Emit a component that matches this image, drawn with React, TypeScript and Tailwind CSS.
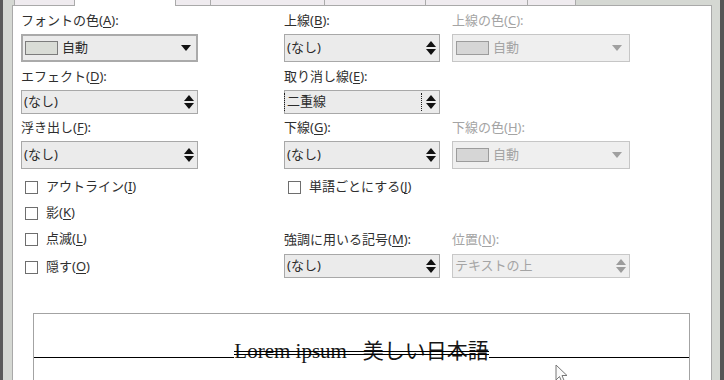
import React from "react"

const tabs = [
  { w: "w-[61px]", active: false },
  { w: "w-[101px]", active: true },
  { w: "w-[35px]", active: false },
  { w: "w-[114px]", active: false },
  { w: "w-[101px]", active: false },
  { w: "w-[102px]", active: false },
  { w: "w-[48px]", active: false },
]

function Label({ text, m, disabled }: { text: string; m: string; disabled?: boolean }) {
  return (
    <div
      className={`h-[17px] leading-[17px] text-[13px] whitespace-nowrap ${disabled ? "text-[#a4a4a4]" : "text-[#2f2f2f]"}`}
    >
      {text}(<u className="underline-offset-2">{m}</u>):
    </div>
  )
}

function Tri({ up, color }: { up?: boolean; color: string }) {
  return (
    <svg width="10" height="6" viewBox="0 0 10 6">
      <path d={up ? "M5 0 L10 6 L0 6 Z" : "M0 0 L10 0 L5 6 Z"} fill={color} />
    </svg>
  )
}

function Spin({
  value,
  className,
  disabled,
  focus,
}: {
  value: string
  className: string
  disabled?: boolean
  focus?: boolean
}) {
  return (
    <div
      className={`flex items-center border text-[13px] ${className} ${
        disabled ? "border-[#c8c8c8] bg-[#efefef] text-[#a4a4a4]" : "border-[#a8a8a8] bg-[#ebebeb] text-[#2b2b2b]"
      }`}
    >
      {focus ? (
        <div className="flex-1 self-stretch my-[2px] -ml-px flex items-center border-x border-dotted border-[#1e1e1e] pl-[2px] mr-[4px]">
          {value}
        </div>
      ) : (
        <div className="flex-1 pl-[2px]">{value}</div>
      )}
      <div className="flex flex-col gap-[2px] pr-[3px]">
        <Tri up color={disabled ? "#9c9c9c" : "#111"} />
        <Tri color={disabled ? "#9c9c9c" : "#111"} />
      </div>
    </div>
  )
}

function ColorBox({ className, disabled }: { className: string; disabled?: boolean }) {
  return (
    <div
      className={`flex items-center text-[13px] ${className} ${
        disabled
          ? "border border-[#c6c6c6] bg-[#efefef] text-[#a4a4a4] pl-[3px]"
          : "border-2 border-[#aaaaaa] bg-[#ebebeb] text-[#2b2b2b] pl-[2px]"
      }`}
    >
      <div
        className={`w-[33px] h-[14px] border ${
          disabled ? "bg-[#d6d6d6] border-[#9c9c9c]" : "bg-[#d9dcd6] border-[#7c7c7c]"
        }`}
      />
      <div className="flex-1 pl-[4px]">自動</div>
      <div className={disabled ? "pr-[7px]" : "pr-[5px]"}>
        <svg width="10" height="6" viewBox="0 0 10 6">
          <path d="M0 0 L10 0 L5 6 Z" fill={disabled ? "#a0a0a0" : "#111"} />
        </svg>
      </div>
    </div>
  )
}

function Check({ text, m }: { text: string; m: string }) {
  return (
    <div className="h-[26px] flex items-center pl-[4px] text-[13px] text-[#2f2f2f] whitespace-nowrap">
      <div className="w-[13px] h-[13px] border border-[#6e6e6e] bg-white" />
      <span className="ml-[8px]">
        {text}(<u className="underline-offset-2">{m}</u>)
      </span>
    </div>
  )
}

export default function App() {
  return (
    <div className="relative w-[724px] h-[380px] overflow-hidden flex bg-[#d5d8d3] font-['Noto_Sans','Noto_Sans_CJK_JP',sans-serif]">
      <div className="w-[3px] bg-[#5a5a5a]" />
      <div className="flex flex-col pl-[9px] pr-[8px] w-[717px]">
        {/* tab strip */}
        <div className="flex h-[5px] pl-[2px]">
          {tabs.map((t, i) => (
            <div
              key={i}
              className={`${t.w} border-r border-[#ababab] ${
                t.active ? "relative z-10 h-[6px] bg-white" : "h-[5px] bg-[#efebef]"
              } ${i === 0 ? "border-l" : ""}`}
            />
          ))}
        </div>

        <div className="relative flex-1 bg-white border border-b-0 border-[#a9a9a9]">
          <div className="pl-[8px] pt-[6px]">
            <div className="grid grid-cols-[263px_168px_178px]">
              <Label text="フォントの色" m="A" />
              <Label text="上線" m="B" />
              <Label text="上線の色" m="C" disabled />
            </div>
            <div className="grid grid-cols-[263px_168px_178px] mt-[5px] h-[28px]">
              <ColorBox className="w-[177px] h-[28px]" />
              <Spin value="(なし)" className="w-[156px] h-[28px]" />
              <ColorBox className="w-[178px] h-[28px]" disabled />
            </div>

            <div className="grid grid-cols-[263px_168px_178px] mt-[6px]">
              <Label text="エフェクト" m="D" />
              <Label text="取り消し線" m="E" />
              <div />
            </div>
            <div className="grid grid-cols-[263px_168px_178px] mt-[5px] h-[24px]">
              <Spin value="(なし)" className="w-[177px] h-[24px]" />
              <Spin value="二重線" className="w-[156px] h-[24px]" focus />
              <div />
            </div>

            <div className="grid grid-cols-[263px_168px_178px] mt-[5px]">
              <Label text="浮き出し" m="F" />
              <Label text="下線" m="G" />
              <Label text="下線の色" m="H" disabled />
            </div>
            <div className="grid grid-cols-[263px_168px_178px] mt-[5px] h-[28px]">
              <Spin value="(なし)" className="w-[177px] h-[28px]" />
              <Spin value="(なし)" className="w-[156px] h-[28px]" />
              <ColorBox className="w-[178px] h-[28px]" disabled />
            </div>

            <div className="grid grid-cols-[263px_168px_178px] mt-[5px]">
              <div className="flex flex-col">
                <Check text="アウトライン" m="I" />
                <Check text="影" m="K" />
                <Check text="点滅" m="L" />
                <div className="mt-[2px]">
                  <Check text="隠す" m="O" />
                </div>
              </div>
              <div className="flex flex-col">
                <Check text="単語ごとにする" m="J" />
                <div className="mt-[31px]">
                  <Label text="強調に用いる記号" m="M" />
                </div>
                <Spin value="(なし)" className="w-[156px] h-[24px] mt-[6px]" />
              </div>
              <div className="flex flex-col">
                <div className="mt-[57px]">
                  <Label text="位置" m="N" disabled />
                </div>
                <Spin value="テキストの上" className="w-[178px] h-[24px] mt-[6px]" disabled />
              </div>
            </div>
          </div>

          {/* preview */}
          <div className="ml-[20px] mt-[33px] w-[657px] h-[90px] border border-[#a3a3a3] bg-white pt-[22px]">
            <div className="flex items-baseline">
              <div className="flex-1 h-px bg-black" />
              <div className="relative z-10 bg-white whitespace-pre text-[21px] leading-[26px] text-[#161616]">
                <span className="font-['Liberation_Serif',serif]">Lorem ipsum   </span>
                <span className="font-['Noto_Sans_CJK_JP',sans-serif]">美しい日本語</span>
                {/* double strikethrough */}
                <div className="absolute left-0 right-0 bottom-[12px] h-px bg-black" />
                <div className="absolute left-0 right-0 bottom-[9px] h-px bg-black" />
              </div>
              <div className="flex-1 h-px bg-black" />
            </div>
          </div>
        </div>
      </div>
      <div className="w-[4px] bg-[#555555]" />

      {/* mouse pointer */}
      <svg className="absolute left-[555px] top-[364px] z-20" width="14" height="20" viewBox="0 0 14 20">
        <path
          d="M1 1 L1 16 L4.5 12.5 L7 18.5 L9.5 17.5 L7 11.5 L12 11.5 Z"
          fill="#fafafa"
          stroke="#777"
          strokeWidth="1"
          strokeLinejoin="round"
        />
      </svg>
    </div>
  )
}
